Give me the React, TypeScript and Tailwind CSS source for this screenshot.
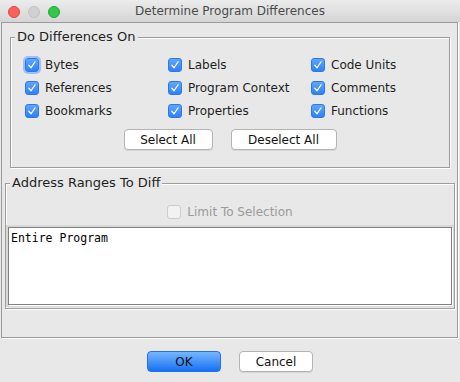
import React from "react";
import clsx from "clsx";

// one blue aqua-style checkbox with its label
const Check = ({ label, focused }: { label: string; focused?: boolean }) => (
  <div className="flex h-[23px] items-center gap-[6px]">
    <span
      className={clsx(
        "flex h-[14px] w-[14px] items-center justify-center rounded-[3px] border border-[#2d78e8] bg-gradient-to-b from-[#5fa6fb] to-[#2f80f6]",
        focused && "shadow-[0_0_0_2px_rgba(110,164,240,0.6)]"
      )}
    >
      <svg viewBox="0 0 14 14" className="h-[12px] w-[12px]">
        <path d="M3.2 7.2 L5.9 10.2 L10.6 3.2" fill="none" stroke="#fff" strokeWidth="1.5" strokeLinecap="round" strokeLinejoin="round" />
      </svg>
    </span>
    <span className="text-[#1e1e1e]">{label}</span>
  </div>
);

const Button = ({ children, w, primary }: { children: React.ReactNode; w: string; primary?: boolean }) => (
  <button
    className={clsx(
      "flex h-[21px] items-center justify-center rounded-[4px] border text-[#111]",
      w,
      primary
        ? "border-[#2a6fe0] bg-gradient-to-b from-[#74b6fb] to-[#1270f6]"
        : "border-[#b3b3b3] bg-white shadow-[0_1px_0_rgba(0,0,0,0.08)]"
    )}
  >
    {children}
  </button>
);

export default function App() {
  return (
    <div className="flex h-[382px] w-[460px] flex-col overflow-hidden bg-[#e8e8e8] font-['DejaVu_Sans','Noto_Sans',sans-serif] text-[12px]">
      {/* title bar */}
      <div className="relative flex h-[22px] items-center justify-center bg-gradient-to-b from-[#ececec] to-[#d5d5d5]">
        <div className="absolute left-[8px] top-[6px] flex gap-[8px]">
          <span className="h-[12px] w-[12px] rounded-full border border-[#e0443e] bg-[#fc605c]" />
          <span className="h-[12px] w-[12px] rounded-full border border-[#c2c2c2] bg-[#d0d0d0]" />
          <span className="h-[12px] w-[12px] rounded-full border border-[#1fa630] bg-[#34c84a]" />
        </div>
        <span className="text-[12px] text-[#4a4a4a]">Determine Program Differences</span>
      </div>

      {/* main panel */}
      <div className="ml-[1px] h-[316px] w-[457px] border border-[#9b9b9b] shadow-[1px_1px_0_#fff]">
        {/* group 1 */}
        <div className="relative ml-[8px] mt-[14px] h-[131px] w-[440px] border border-[#9d9d9d] pl-[14px] pt-[15px] shadow-[1px_1px_0_#fff,inset_1px_1px_0_#fff]">
          <span className="absolute left-[4px] top-[-9px] bg-[#e8e8e8] px-[2px] text-[13px] leading-[16px] text-[#1e1e1e]">
            Do Differences On
          </span>
          <div className="grid grid-cols-[143px_143px_143px]">
            <Check label="Bytes" focused />
            <Check label="Labels" />
            <Check label="Code Units" />
            <Check label="References" />
            <Check label="Program Context" />
            <Check label="Comments" />
            <Check label="Bookmarks" />
            <Check label="Properties" />
            <Check label="Functions" />
          </div>
          <div className="mt-[7px] flex justify-center gap-[18px] pr-[14px]">
            <Button w="w-[89px]">Select All</Button>
            <Button w="w-[106px]">Deselect All</Button>
          </div>
        </div>

        {/* group 2 */}
        <div className="relative ml-[3px] mt-[15px] h-[126px] w-[450px] border border-[#9d9d9d] pt-[16px] shadow-[1px_1px_0_#fff,inset_1px_1px_0_#fff]">
          <span className="absolute left-[4px] top-[-9px] bg-[#e8e8e8] px-[2px] text-[13px] leading-[16px] text-[#1e1e1e]">
            Address Ranges To Diff
          </span>
          <div className="flex h-[23px] items-center justify-center gap-[6px]">
            <span className="h-[14px] w-[14px] rounded-[3px] border border-[#cdcdcd] bg-[#f2f2f2]" />
            <span className="text-[#9a9a9a]">Limit To Selection</span>
          </div>
          <div className="ml-[2px] mt-[4px] h-[78px] w-[444px] border border-[#808080] bg-white px-[2px] pt-[3px] font-['DejaVu_Sans_Mono',monospace] text-[11.5px] leading-[14px] text-black shadow-[1px_1px_0_#fff,0_0_0_2px_#d8d8d8]">
            Entire Program
          </div>
        </div>
      </div>

      {/* dialog buttons */}
      <div className="flex justify-center gap-[18px] pt-[13px] text-[12px]">
        <Button w="w-[74px]" primary>
          OK
        </Button>
        <Button w="w-[74px]">Cancel</Button>
      </div>
    </div>
  );
}
